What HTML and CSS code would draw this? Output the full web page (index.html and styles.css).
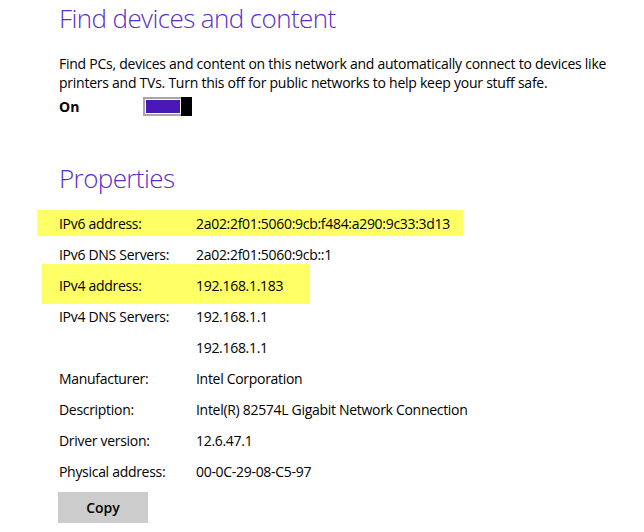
FILE: index.html
```html
<!DOCTYPE html>
<html>
<head>
<meta charset="utf-8">
<link rel="stylesheet" href="styles.css">
</head>
<body>
<div class="page">
  <h1 class="heading">Find devices and content</h1>
  <p class="desc">Find PCs, devices and content on this network and automatically connect to devices like printers and TVs. Turn this off for public networks to help keep your stuff safe.</p>
  <div class="switch-row">
    <span class="switch-label">On</span>
    <div class="toggle"><div class="track"><div class="fill"></div></div><div class="thumb"></div></div>
  </div>
  <h1 class="heading heading-props">Properties</h1>
  <div class="props">
    <div class="row hl hl-1"><span class="label">IPv6 address:</span><span class="value">2a02:2f01:5060:9cb:f484:a290:9c33:3d13</span></div>
    <div class="row"><span class="label">IPv6 DNS Servers:</span><span class="value">2a02:2f01:5060:9cb::1</span></div>
    <div class="row hl hl-2"><span class="label">IPv4 address:</span><span class="value">192.168.1.183</span></div>
    <div class="row"><span class="label">IPv4 DNS Servers:</span><span class="value">192.168.1.1</span></div>
    <div class="row"><span class="label"></span><span class="value">192.168.1.1</span></div>
    <div class="row"><span class="label">Manufacturer:</span><span class="value">Intel Corporation</span></div>
    <div class="row"><span class="label">Description:</span><span class="value">Intel(R) 82574L Gigabit Network Connection</span></div>
    <div class="row"><span class="label">Driver version:</span><span class="value">12.6.47.1</span></div>
    <div class="row"><span class="label">Physical address:</span><span class="value">00-0C-29-08-C5-97</span></div>
  </div>
  <button class="copy">Copy</button>
</div>
</body>
</html>
```
FILE: styles.css
```css
html, body {
  margin: 0;
  padding: 0;
  background: #ffffff;
}
body {
  font-family: "Open Sans", "Noto Sans", sans-serif;
  color: #000000;
  width: 644px;
  height: 532px;
  overflow: hidden;
}
.page {
  padding-left: 59px;
}
.heading {
  margin: 0;
  font-weight: 300;
  font-size: 26px;
  line-height: 36px;
  color: #5b2fc6;
  letter-spacing: -0.6px;
}
.desc {
  margin: 18px 0 0 0;
  font-size: 14px;
  line-height: 19px;
  width: 575px;
  letter-spacing: -0.25px;
}
.switch-row {
  display: flex;
  align-items: center;
  height: 25px;
  margin-top: 2px;
}
.switch-label {
  width: 84px;
  font-size: 14px;
  font-weight: 700;
}
.toggle {
  display: flex;
  width: 49px;
  height: 19px;
}
.track {
  flex: 1;
  border: 2px solid #a6a6a6;
  border-right: none;
  padding: 1px;
  background: #ffffff;
  display: flex;
}
.fill {
  flex: 1;
  background: #4a17b8;
}
.thumb {
  width: 11px;
  background: #000000;
}
.heading-props {
  margin-top: 41px;
}
.props {
  margin-top: 12px;
}
.row {
  position: relative;
  display: flex;
  height: 31px;
  line-height: 31px;
  font-size: 14px;
  letter-spacing: -0.3px;
  z-index: 0;
}
.label {
  width: 137px;
  flex: none;
}
.hl::before {
  content: "";
  position: absolute;
  background: #ffff66;
  z-index: -1;
}
.hl-1::before {
  left: -22px;
  width: 426px;
  top: 2px;
  height: 26px;
}
.hl-2::before {
  left: -17px;
  width: 268px;
  top: -6px;
  height: 40px;
}
.copy {
  display: block;
  margin-top: 5px;
  margin-left: -1px;
  width: 90px;
  height: 31px;
  border: none;
  background: #cccccc;
  font-family: "Open Sans", "Noto Sans", sans-serif;
  font-size: 14px;
  font-weight: 600;
  color: #000000;
  padding: 0;
}
```
